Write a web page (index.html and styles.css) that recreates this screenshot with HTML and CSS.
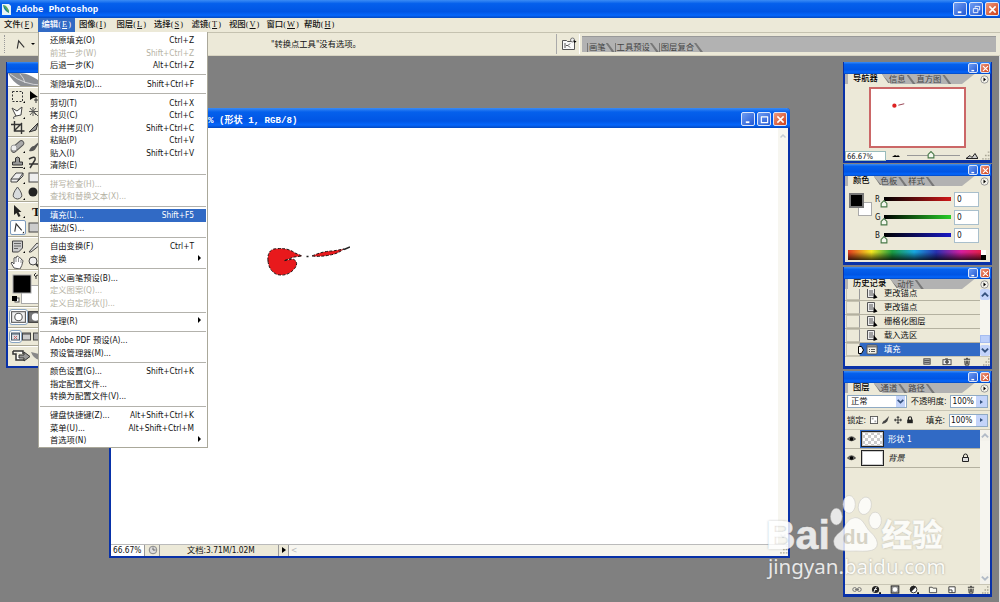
FILE: index.html
```html
<!DOCTYPE html>
<html lang="zh-CN">

<head>
    <meta charset="UTF-8">
    <meta name="viewport" content="width=device-width, initial-scale=1.0">
    <title>Adobe Photoshop</title>
    <link rel="stylesheet" href="styles.css">
</head>

<body>
    <svg class="defs">
        <symbol id="min" viewBox="0 0 10 10"><path d="M2 8h4" stroke="#fff" stroke-width="2" /></symbol>
        <symbol id="restore" viewBox="0 0 10 10"><path d="M3.5 3V1.5h5v4H7M1.5 4h5v4.500h-5z" fill="none" stroke="#fff" /></symbol>
        <symbol id="max" viewBox="0 0 10 10"><path d="M1 2h8M1.500 2v6.500h7V2" fill="none" stroke="#fff" stroke-width="1.300" /></symbol>
        <symbol id="close" viewBox="0 0 10 10"><path d="M1.500 1.500l7 7m0-7l-7 7" stroke="#fff" stroke-width="1.700" /></symbol>
        <symbol id="fly" viewBox="0 0 9 9"><circle cx="4.500" cy="4.500" r="3.700" fill="#f4f3ea" stroke="#999" /><path d="M3.500 2.500v4l2.500-2z" /></symbol>
        <symbol id="trash" viewBox="0 0 9 10"><path d="M1 2.500h7M3.500 1.500h2M2 4l.5 5h4L7 4M3.700 4v4M5.300 4v4" fill="none" stroke="#222" /></symbol>
        <symbol id="eye" viewBox="0 0 10 8"><path d="M.5 4Q5-1 9.500 4Q5 8 .5 4z" fill="#777" stroke="#222" stroke-width=".8" /><circle cx="5" cy="4" r="2" /></symbol>
        <symbol id="lock" viewBox="0 0 9 10"><path d="M2.500 5V3a2 2 0 0 1 4 0v2" fill="none" stroke="#222" /><path d="M1.500 4.500h6v4h-6z" fill="#ddd" stroke="#222" /></symbol>
        <symbol id="doc" viewBox="0 0 12 11"><path d="M1.500.5h7v9h-7z" fill="#eee" stroke="#555" /><path d="M3 3h4M3 5h4M3 7h4" stroke="#555" /><path d="M7.500 5v6l4-1.500z" /></symbol>
        <symbol id="dialog" viewBox="0 0 12 11"><rect x="1" y="1" width="10" height="9" rx="1" fill="#f2f0e4" stroke="#555" /><path d="M1 2.500h10" stroke="#777" stroke-width="2" /><path d="M3 5.500h1M5 5.500h4M3 7.500h1M5 7.500h4" stroke="#555" /></symbol>
        <symbol id="thumb" viewBox="0 0 7 7"><path d="M1 6V3l2.500-2.500L6 3v3z" fill="#f4f8ee" stroke="#4a7a4a" /></symbol>
        <symbol id="grip" viewBox="0 0 8 8"><path d="M6 1h1.500M3.500 4H5M6 4h1.500M1 7h1.500M3.500 7H5M6 7h1.500" stroke="#a9a695" stroke-width="1.300" /></symbol>
        <symbol id="down" viewBox="0 0 8 8"><path d="M1.500 2.500L4 5l2.500-2.500" fill="none" stroke="#35527f" stroke-width="1.500" /></symbol>
        <symbol id="up" viewBox="0 0 8 8"><path d="M1.500 5.500L4 3l2.500 2.500" fill="none" stroke="#35527f" stroke-width="1.500" /></symbol>
        <symbol id="point" viewBox="0 0 14 14"><path d="M3.500 11.500L5 3l6 7" fill="none" stroke="#333" stroke-width="1.200" /></symbol>
    </svg>

    <header class="titlebar">
        <svg class="app-icon" viewBox="0 0 9 11"><path d="M0 0h7l2 2v9H0z" fill="#e8f4f4" /><path d="M1 1q1 6 6 8q1-4-6-8" fill="#167f96" /><path d="M1 1q5 0 6 8" fill="#58a85b" /></svg>
        <span>Adobe Photoshop</span>
        <div class="buttons">
            <i><svg><use href="#min" /></svg></i><i><svg><use href="#restore" /></svg></i><i class="x"><svg><use href="#close" /></svg></i>
        </div>
    </header>
    <nav class="menubar">
        <span>文件(<u>F</u>)</span><span class="open">编辑(<u>E</u>)</span><span>图像(<u>I</u>)</span><span>图层(<u>L</u>)</span><span>选择(<u>S</u>)</span><span>滤镜(<u>T</u>)</span><span>视图(<u>V</u>)</span><span>窗口(<u>W</u>)</span><span>帮助(<u>H</u>)</span>
    </nav>
    <section class="options">
        <span class="gripper"></span>
        <svg class="opt-tool" viewBox="0 0 14 14"><use href="#point" /></svg>
        <span class="caret"></span>
        <span class="opt-text">"转换点工具"没有选项。</span>
        <div class="bridge"><svg viewBox="0 0 16 14"><path d="M1.500 3.500h4l1 1h7v8h-12z" fill="#fafafa" stroke="#555" /><path d="M4 6v5M5 8.500h2l2-2M7 8.500l2 2" fill="none" stroke="#555" /><circle cx="11.500" cy="3" r="2" fill="#eee" stroke="#777" /><path d="M12.500 3l3 1.500-2 1.500z" /></svg></div>
        <div class="well tabs"><b>画笔</b><b>工具预设</b><b>图层复合</b></div>
    </section>

    <main class="workspace">
        <!-- toolbox -->
        <aside class="window toolbox">
            <div class="bar"></div>
            <div class="feather"><svg viewBox="0 0 34 16"><path d="M0 0Q6 12 18 15Q27 17 34 11Q30 6 23 3Q18 0 10 0z" fill="#8d9095" /><path d="M2 1Q16 12 34 12M12 1q4 4 5 9" fill="none" stroke="#dcdde0" stroke-width=".9" /></svg></div>
            <div class="tools three">
                <svg viewBox="0 0 16 15"><rect x="2.500" y="2.500" width="10" height="10" fill="none" stroke="#333" stroke-dasharray="2 1.500" /><path d="M13 14h2v-2z" /></svg>
                <svg viewBox="0 0 16 15"><path d="M3 2v9l3-2 5-1z" /><path d="M9 9v5M7 11h5" stroke="#333" /></svg>
                <svg viewBox="0 0 16 15"><path d="M2 3l5 3 5-4-1 8-5 1zM6 11q-4 1-2 3" fill="#fff" stroke="#444" /><path d="M13 14h2v-2z" /></svg>
                <svg viewBox="0 0 16 15"><path d="M6 2v9M2 6.500h9M3 3l6 7M9 3l-6 7M7 7l6 6" stroke="#555" /></svg>
                <svg viewBox="0 0 16 15"><path d="M4.500 1v10h10M1 4.500h10.500V14M4 11l8-8" fill="none" stroke="#333" stroke-width="1.400" /></svg>
                <svg viewBox="0 0 16 15"><path d="M2 12l9-9-2 7z" fill="#999" stroke="#333" /></svg>
            </div>
            <div class="tools four">
                <svg viewBox="0 0 16 15"><rect x="0" y="5" width="15" height="5" rx="2.500" transform="rotate(-42 7.500 7.500)" fill="#aaa" stroke="#555" /><circle cx="4" cy="9" r="3" fill="#eee" stroke="#999" /><path d="M13 14h2v-2z" /></svg>
                <svg viewBox="0 0 16 15"><path d="M2 12q2-5 5-5l7-6-5 8q-2 4-7 3" fill="#555" /></svg>
                <svg viewBox="0 0 16 15"><path d="M5.500 7V3q2-2 4 0v4h3v3h-10V7zM2 12.500h11" fill="#999" stroke="#333" /><path d="M13 14h2v-2z" /></svg>
                <svg viewBox="0 0 16 15"><path d="M2 4q7-4 6 1L3 13M2 9h9" fill="none" stroke="#333" stroke-width="1.500" /></svg>
                <svg viewBox="0 0 16 15"><path d="M1 9l5-6h7L9 9zM1 9v3h6l2-3M13 3v3l-6 6" fill="#eee" stroke="#444" /><path d="M13 14h2v-2z" /></svg>
                <svg viewBox="0 0 16 15"><rect x="2" y="3" width="12" height="9" fill="#eee" stroke="#444" /></svg>
                <svg viewBox="0 0 16 15"><path d="M7.500 1Q2 8 3.500 11q4 4 8 0Q13 8 7.500 1z" fill="#d8dbdd" stroke="#555" /><path d="M13 14h2v-2z" /></svg>
                <svg viewBox="0 0 16 15"><circle cx="6" cy="6" r="4.500" fill="#222" /></svg>
            </div>
            <div class="tools two">
                <svg viewBox="0 0 16 15"><path d="M4 1v10l2.500-2 2 4 2-1-2-4h3z" fill="#222" /><path d="M13 14h2v-2z" /></svg>
                <span class="type">T</span>
                <svg class="selected" viewBox="0 0 16 15"><use href="#point" /><path d="M13 14h2v-2z" /></svg>
                <svg viewBox="0 0 16 15"><rect x="2" y="3" width="12" height="9" fill="#ccc" stroke="#444" /></svg>
            </div>
            <div class="tools two">
                <svg viewBox="0 0 16 15"><path d="M2.500 2h10v7l-4 4h-6z" fill="#ccc" stroke="#444" /><path d="M4 4.500h7M4 7h7M4 9.500h4" stroke="#666" /><path d="M13 14h2v-2z" /></svg>
                <svg viewBox="0 0 16 15"><path d="M2 13l8-9 3 2-9 7z" fill="#ddd" stroke="#444" /></svg>
                <svg viewBox="0 0 16 15"><path d="M4 13L1 8l1-1 2 2V3q1-1 2 0l1-2q1 0 1.500 1L10 3q1 0 1 1l1 1q1 0 1 1-1 5-3 8z" fill="#fff" stroke="#555" /><path d="M6 3v4M8.500 3v4M11 5v3" stroke="#777" stroke-width=".8" /></svg>
                <svg viewBox="0 0 16 15"><circle cx="6" cy="6" r="4" fill="#eee" stroke="#444" /><path d="M9 9l4 4" stroke="#333" stroke-width="2" /></svg>
            </div>
            <div class="colors">
                <svg viewBox="0 0 50 37"><rect x="13.500" y="15.500" width="20" height="18" fill="#fff" stroke="#aaa" /><rect x="5" y="5" width="18" height="18" fill="#000" stroke="#aaa" /><rect x="7" y="28" width="4" height="4" fill="#fff" stroke="#555" /><rect x="4" y="26" width="5" height="5" /><path d="M28 9V6q0-1 4-1m-4-2l-2 2 2 2" fill="none" stroke="#333" /></svg>
            </div>
            <div class="modes">
                <svg class="on" viewBox="0 0 16 13"><rect x="1.500" y="1.500" width="13" height="10" fill="#eee" stroke="#555" /><circle cx="8" cy="6.500" r="3.500" fill="#fff" stroke="#555" /></svg>
                <svg viewBox="0 0 16 13"><rect x="1.500" y="1.500" width="13" height="10" fill="#777" stroke="#333" /><circle cx="8" cy="6.500" r="3.500" fill="#fff" /></svg>
            </div>
            <div class="modes screens">
                <svg class="on" viewBox="0 0 11 11"><rect x="1.500" y="2" width="8" height="7" fill="#d8dce2" stroke="#456" /><path d="M2 3h7" stroke="#456" /><path d="M4 5l3 3m0-3L4 8" stroke="#c66" /></svg>
                <svg viewBox="0 0 11 11"><rect x="1.500" y="2" width="8" height="7" fill="#ccc" stroke="#444" /><path d="M2 3h7" stroke="#444" /></svg>
                <svg viewBox="0 0 11 11"><rect x="1.500" y="2" width="8" height="7" fill="#aaa" stroke="#444" /></svg>
            </div>
            <div class="jump"><svg viewBox="0 0 30 16"><path d="M3 3h10v3M3 3v3h3v6h8" fill="#fff" stroke="#333" stroke-width="1.500" /><path d="M9 7h5V4l6 4.500-6 4.500v-3H9z" fill="#999" stroke="#333" /><path d="M21 4q2 6 8 8V6z" fill="#888" /></svg></div>
        </aside>

        <!-- document window -->
        <section class="window document">
            <div class="bar">
                <span>% (形状 1, RGB/8)</span>
                <div class="buttons"><i><svg><use href="#min" /></svg></i><i><svg><use href="#max" /></svg></i><i class="x"><svg><use href="#close" /></svg></i></div>
            </div>
            <div class="canvas">
                <svg class="art" viewBox="0 0 100 40">
                    <g fill="#e8191c" stroke="#211" stroke-dasharray="3 1.500">
                        <path d="M18 21Q17 11 24 9Q37 7 45 13L52 16L44 17L34 20.700L43 19Q49 22 45 28Q38 37 27 34.500Q19 31 18 21z" />
                        <path d="M62 16Q73 11 83 11L94 9Q87 14 80 15Q71 17 62 16z" />
                    </g>
                    <path d="M56.500 16.500h2M94 9.500l6-2.500" stroke="#222" stroke-width="1.500" />
                </svg>
                <span class="vscroll"><svg viewBox="0 0 8 8"><use href="#up" /></svg><svg viewBox="0 0 8 8"><use href="#down" /></svg></span>
            </div>
            <div class="status">
                <span class="zoom">66.67%</span>
                <span class="clock"><svg viewBox="0 0 10 10"><circle cx="5" cy="5" r="3.800" fill="#ddd" stroke="#888" /><path d="M5 2.500V5h2.500" fill="none" stroke="#666" /></svg></span>
                <span class="size">文档:3.71M/1.02M</span>
                <span class="play"><i></i></span>
                <span class="hscroll"><em>&lt;</em><svg viewBox="0 0 8 8"><use href="#grip" /></svg></span>
            </div>
        </section>

        <!-- palettes -->
        <section class="window palette navigator">
            <div class="bar"><div class="buttons"><i><svg><use href="#min" /></svg></i><i class="x"><svg><use href="#close" /></svg></i></div></div>
            <div class="tabs"><b class="active">导航器</b><b>信息</b><b>直方图</b><span class="fly"><svg viewBox="0 0 9 9"><use href="#fly" /></svg></span></div>
            <div class="preview"><svg viewBox="0 0 93 58"><circle cx="23" cy="17" r="2.200" fill="#d22" /><path d="M27 16.500l6-1.500" stroke="#945" /></svg></div>
            <div class="navfoot">
                <span class="field">66.67%</span>
                <svg class="mount" viewBox="0 0 8 5"><path d="M0 4l3-2 2 1 1-1 2 2z" /></svg>
                <span class="track"><svg viewBox="0 0 7 7"><use href="#thumb" /></svg></span>
                <svg class="mount big" viewBox="0 0 12 6"><path d="M0 5.500l4-3 2 2 3-4 3 5z" fill="#ccc" stroke="#222" /></svg>
                <svg class="grip" viewBox="0 0 8 8"><use href="#grip" /></svg>
            </div>
        </section>

        <section class="window palette color">
            <div class="bar"><div class="buttons"><i><svg><use href="#min" /></svg></i><i class="x"><svg><use href="#close" /></svg></i></div></div>
            <div class="tabs"><b class="active">颜色</b><b>色板</b><b>样式</b><span class="fly"><svg viewBox="0 0 9 9"><use href="#fly" /></svg></span></div>
            <div class="mixer">
                <svg class="swatches" viewBox="0 0 24 26"><rect x="9.500" y="10.500" width="13" height="13" fill="#fff" stroke="#aaa" /><rect x="1" y="2" width="13" height="13" stroke="#777" stroke-width="2" /><rect x="2" y="3" width="11" height="11" /></svg>
                <div class="channels">
                    <div><label>R</label><span class="ramp red"><svg viewBox="0 0 7 7"><use href="#thumb" /></svg></span><span class="num">0</span></div>
                    <div><label>G</label><span class="ramp green"><svg viewBox="0 0 7 7"><use href="#thumb" /></svg></span><span class="num">0</span></div>
                    <div><label>B</label><span class="ramp blue"><svg viewBox="0 0 7 7"><use href="#thumb" /></svg></span><span class="num">0</span></div>
                </div>
            </div>
            <div class="spectrum"><i></i></div>
        </section>

        <section class="window palette history">
            <div class="bar"><div class="buttons"><i><svg><use href="#min" /></svg></i><i class="x"><svg><use href="#close" /></svg></i></div></div>
            <div class="tabs"><b class="active">历史记录</b><b>动作</b><span class="fly"><svg viewBox="0 0 9 9"><use href="#fly" /></svg></span></div>
            <div class="scrolled">
                <ul>
                    <li><s></s><svg viewBox="0 0 12 11"><use href="#doc" /></svg>更改锚点</li>
                    <li><s></s><svg viewBox="0 0 12 11"><use href="#doc" /></svg>更改锚点</li>
                    <li><s></s><svg viewBox="0 0 12 11"><use href="#doc" /></svg>栅格化图层</li>
                    <li><s></s><svg viewBox="0 0 12 11"><use href="#doc" /></svg>载入选区</li>
                    <li class="current"><s></s><svg viewBox="0 0 12 11"><use href="#dialog" /></svg>填充<svg class="marker" viewBox="0 0 6 8"><path d="M.5.500h3l2 3.500-2 3.500h-3z" fill="#fff" stroke="#000" /></svg></li>
                </ul>
                <span class="xpscroll"><svg viewBox="0 0 8 8"><use href="#up" /></svg><i></i><svg viewBox="0 0 8 8"><use href="#down" /></svg></span>
            </div>
            <div class="foot">
                <svg viewBox="0 0 10 10"><rect x="1.500" y="2" width="7" height="6" fill="#bbb" stroke="#444" /><path d="M2 4h6M2 6h6" stroke="#444" /></svg>
                <svg viewBox="0 0 10 10"><rect x=".5" y="3" width="9" height="5.500" fill="#eee" stroke="#444" /><path d="M3 2h3" stroke="#444" /><circle cx="5" cy="5.500" r="1.500" fill="#777" stroke="#333" /></svg>
                <svg viewBox="0 0 9 10"><use href="#trash" /></svg>
                <svg class="grip" viewBox="0 0 8 8"><use href="#grip" /></svg>
            </div>
        </section>

        <section class="window palette layers">
            <div class="bar"><div class="buttons"><i><svg><use href="#min" /></svg></i><i class="x"><svg><use href="#close" /></svg></i></div></div>
            <div class="tabs"><b class="active">图层</b><b>通道</b><b>路径</b><span class="fly"><svg viewBox="0 0 9 9"><use href="#fly" /></svg></span></div>
            <div class="row">
                <span class="select">正常<svg viewBox="0 0 8 8"><use href="#down" /></svg></span>
                <span>不透明度:</span>
                <span class="percent">100%<i></i></span>
            </div>
            <div class="row locks">
                <span>锁定:</span>
                <svg viewBox="0 0 9 9"><rect x=".5" y=".5" width="8" height="8" fill="#fff" stroke="#555" /><path d="M2 2h2v2H2zM5 5h2v2H5z" fill="#aaa" /></svg>
                <svg viewBox="0 0 9 9"><path d="M0 9q1-4 3-4l5-5-2 6q-2 3-6 3" fill="#444" /></svg>
                <svg viewBox="0 0 9 9"><path d="M4.500 0v9M0 4.500h9M3 1.500h3M3 7.500h3M1.500 3v3M7.500 3v3" stroke="#333" /></svg>
                <svg viewBox="0 0 9 10"><path d="M2.500 5V3a2 2 0 0 1 4 0v2" fill="none" stroke="#222" stroke-width="1.400" /><path d="M1 4.500h7V9H1z" fill="#222" /></svg>
                <span class="push">填充:</span>
                <span class="percent">100%<i></i></span>
            </div>
            <div class="scrolled">
                <div class="stack">
                    <div class="layer current"><svg class="eye" viewBox="0 0 10 8"><use href="#eye" /></svg><span class="thumbnail checks"></span>形状 1</div>
                    <div class="layer"><svg class="eye" viewBox="0 0 10 8"><use href="#eye" /></svg><span class="thumbnail"></span><em>背景</em><svg class="lock" viewBox="0 0 9 10"><use href="#lock" /></svg></div>
                </div>
                <span class="xpscroll off"><svg viewBox="0 0 8 8"><use href="#up" /></svg><svg viewBox="0 0 8 8"><use href="#down" /></svg></span>
            </div>
            <div class="foot">
                <svg viewBox="0 0 13 10"><path d="M1 5a2 2 0 0 1 5 0 2 2 0 0 1-5 0M7 5a2 2 0 0 1 5 0 2 2 0 0 1-5 0M4 5h5" fill="none" stroke="#777" stroke-width="1.300" /></svg>
                <svg viewBox="0 0 11 10"><circle cx="5" cy="5" r="4" fill="#222" /><path d="M3 8l3-6M3.500 5h3" stroke="#fff" /><path d="M9 8h2v2H9z" /></svg>
                <svg viewBox="0 0 10 10"><rect x=".7" y="1" width="8.600" height="8" fill="#999" stroke="#222" /><circle cx="5" cy="5" r="2.500" fill="#fff" /></svg>
                <svg viewBox="0 0 11 10"><circle cx="5" cy="5" r="3.700" fill="#fff" stroke="#222" /><path d="M2.300 7.700A3.800 3.800 0 0 1 7.700 2.300z" fill="#222" /><path d="M9 8h2v2H9z" /></svg>
                <svg viewBox="0 0 10 10"><path d="M1 8.500v-6h3l1 1h4v5z" fill="#f8f8f0" stroke="#444" /></svg>
                <svg viewBox="0 0 10 10"><path d="M1.500 2h7v6.500h-7z" fill="#fff" stroke="#333" /><path d="M1.500 5.500H5v3" fill="none" stroke="#333" /></svg>
                <svg viewBox="0 0 9 10"><use href="#trash" /></svg>
                <svg class="grip" viewBox="0 0 8 8"><use href="#grip" /></svg>
            </div>
        </section>
    </main>

    <!-- open edit menu -->
    <div class="menu">
        <p>还原填充(O)<kbd>Ctrl+Z</kbd></p>
        <p class="disabled">前进一步(W)<kbd>Shift+Ctrl+Z</kbd></p>
        <p>后退一步(K)<kbd>Alt+Ctrl+Z</kbd></p>
        <hr>
        <p>渐隐填充(D)...<kbd>Shift+Ctrl+F</kbd></p>
        <hr>
        <p>剪切(T)<kbd>Ctrl+X</kbd></p>
        <p>拷贝(C)<kbd>Ctrl+C</kbd></p>
        <p>合并拷贝(Y)<kbd>Shift+Ctrl+C</kbd></p>
        <p>粘贴(P)<kbd>Ctrl+V</kbd></p>
        <p>贴入(I)<kbd>Shift+Ctrl+V</kbd></p>
        <p>清除(E)</p>
        <hr>
        <p class="disabled">拼写检查(H)...</p>
        <p class="disabled">查找和替换文本(X)...</p>
        <hr>
        <p class="hover">填充(L)...<kbd>Shift+F5</kbd></p>
        <p>描边(S)...</p>
        <hr>
        <p>自由变换(F)<kbd>Ctrl+T</kbd></p>
        <p class="sub">变换</p>
        <hr>
        <p>定义画笔预设(B)...</p>
        <p class="disabled">定义图案(Q)...</p>
        <p class="disabled">定义自定形状(J)...</p>
        <hr>
        <p class="sub">清理(R)</p>
        <hr>
        <p>Adobe PDF 预设(A)...</p>
        <p>预设管理器(M)...</p>
        <hr>
        <p>颜色设置(G)...<kbd>Shift+Ctrl+K</kbd></p>
        <p>指定配置文件...</p>
        <p>转换为配置文件(V)...</p>
        <hr>
        <p>键盘快捷键(Z)...<kbd>Alt+Shift+Ctrl+K</kbd></p>
        <p>菜单(U)...<kbd>Alt+Shift+Ctrl+M</kbd></p>
        <p class="sub">首选项(N)</p>
    </div>

    <!-- watermark -->
    <div class="watermark">
        <div class="logo"><span>Bai</span><div class="paw"><svg viewBox="0 0 54 58"><ellipse cx="8" cy="22" rx="6" ry="8.500" /><ellipse cx="21" cy="9.500" rx="6.300" ry="9" /><ellipse cx="37" cy="11" rx="6.500" ry="9" transform="rotate(15 37 11)" /><ellipse cx="47.500" cy="26" rx="6.300" ry="8.500" /><path d="M27 23Q33 23 37 30Q40 36 46 41Q53 50 47 55Q42 58 28 57Q13 58 8 54Q2 47 9 40Q15 36 18 29Q22 23 27 23z" /></svg><b>du</b></div><span class="cn">经验</span></div>
        <div class="url">jingyan.baidu.com</div>
    </div>
</body>

</html>
```
FILE: styles.css
```css
* {
    box-sizing: border-box;
}

body {
    margin: 0;
    width: 1000px;
    height: 602px;
    overflow: hidden;
    position: relative;
    display: flex;
    flex-direction: column;
    background: #ece9d8;
    color: #111;
    font: 8.3px/1 "DejaVu Sans Condensed", "Noto Sans CJK SC", sans-serif;
    white-space: nowrap;
}

svg {
    display: block;
    flex: none;
}

i, em, s {
    font-style: normal;
    text-decoration: none;
}

.defs {
    position: absolute;
    width: 0;
    height: 0;
}

/* title bars */
.titlebar,
.bar {
    display: flex;
    align-items: center;
    color: #fff;
    font: bold 9.15px "Liberation Mono", "Noto Sans CJK SC", monospace;
    background: linear-gradient(#3b8cf5, #0560ec 20%, #0055e4 65%, #0566fb 85%, #0348c0);
}

.titlebar {
    flex: none;
    height: 18px;
    padding: 0 1px 0 2px;
}

.app-icon {
    width: 9px;
    height: 11px;
    margin-right: 5px;
}

.buttons {
    display: flex;
    gap: 2px;
    margin-left: auto;
}

.buttons i {
    width: 14px;
    height: 14px;
    border: 1px solid #dbe6fb;
    border-radius: 2px;
    display: grid;
    place-items: center;
    background: linear-gradient(135deg, #6f9df2, #2258d4);
}

.buttons .x {
    background: linear-gradient(135deg, #ec9a80, #cf3f17);
}

.buttons svg {
    width: 9px;
    height: 9px;
}

.menubar {
    flex: none;
    display: flex;
    height: 14px;
    font: 500 8.4px/13px "Liberation Serif", "Noto Sans CJK SC", serif;
}

.menubar span {
    width: 37.5px;
    padding-left: 4px;
}

.menubar u {
    padding: 0 1px;
}

.menubar .open {
    background: #316ac5;
    color: #fff;
}

/* tool options */
.options {
    flex: none;
    height: 24px;
    display: flex;
    align-items: center;
    border-top: 1px solid #c5c2b0;
    border-bottom: 1px solid #d8d4c2;
}

.gripper {
    height: 18px;
    margin-left: 4px;
    border-left: 1px dotted #999;
}

.opt-tool {
    width: 13px;
    height: 13px;
    margin-left: 9px;
}

.caret {
    margin-left: 4px;
    border: 2px solid transparent;
    border-top-color: #000;
    border-bottom: 0;
}

.opt-text {
    width: 285px;
    margin-left: 236px;
}

.bridge {
    width: 24px;
    height: 20px;
    padding: 3px 4px;
    border-left: 1px solid #aaa;
    border-right: 1px solid #fff;
}

.bridge svg {
    width: 16px;
    height: 14px;
}

.tabs {
    display: flex;
    align-items: flex-end;
    height: 10px;
    background: #b2b2b2;
    color: #444;
    flex: none;
}

.tabs b {
    font-weight: 400;
    line-height: 9px;
    height: 9px;
    padding: 0 10px 0 1px;
    position: relative;
}

.tabs b::after {
    content: "";
    position: absolute;
    right: 0;
    top: 0;
    width: 9px;
    height: 9px;
    background: #777;
    clip-path: polygon(0 0, 25% 0, 100% 100%, 70% 100%);
}

.tabs .active {
    background: #ece9d8;
    color: #000;
    padding: 0 13px 0 5px;
    margin: 0 -3px 0 3px;
    height: 10px;
    font-weight: 500;
    clip-path: polygon(0 0, calc(100% - 9px) 0, 100% 100%, 0 100%);
}

.fly {
    margin-left: auto;
    width: 28px;
    height: 10px;
    background: #ece9d8;
    clip-path: polygon(45% 0, 100% 0, 100% 100%, 0 100%);
}

.fly svg {
    width: 9px;
    height: 9px;
    margin: 1px 0 0 18px;
}

.well {
    width: 414px;
    height: 16px;
    margin-left: 2px;
    padding-left: 5px;
    border-top: 1px solid #999;
}

.well b {
    padding: 0 9px 0 1px;
    border-left: 1px solid #777;
}

/* floating windows */
.workspace {
    position: relative;
    flex: 1;
    background: #808080;
    border-right: 1px solid #ddd;
}

.window {
    position: absolute;
    border: 2px solid #0831a8;
    border-top: 0;
    background: #ece9d8;
    display: flex;
    flex-direction: column;
}

.bar {
    flex: none;
    height: 11px;
    margin: 0 -1px;
}

.toolbox {
    left: 6px;
    top: 6px;
    width: 66px;
    height: 306px;
}

.feather {
    height: 16px;
    background: #fff;
    overflow: hidden;
}

.feather svg {
    width: 34px;
    height: 16px;
}

.tools,
.colors,
.modes,
.jump {
    border-top: 1px solid #aaa796;
    box-shadow: inset 0 1px #fff;
    padding: 2px;
}

.tools {
    display: grid;
    grid-template-columns: 17px 17px;
    grid-auto-rows: 15.5px;
}

.tools svg {
    width: 16px;
    height: 15px;
}

.three {
    height: 50px;
}

.four {
    height: 65px;
}

.two {
    height: 35px;
}

.two + .two {
    height: 33px;
}

.tools .selected {
    background: #fff;
    border: 1px solid #7d9bbd;
    border-radius: 2px;
}

.type {
    font: bold 13px "Liberation Serif", serif;
    padding-left: 5px;
}

.colors {
    height: 37px;
    padding: 0;
}

.colors svg {
    width: 50px;
    height: 37px;
}

.modes {
    display: flex;
    height: 21px;
    padding: 3px 2px;
}

.modes svg {
    width: 17px;
    height: 14px;
}

.screens {
    height: 18px;
}

.screens svg {
    width: 11px;
    height: 11px;
}

.modes .on {
    background: #fff;
    outline: 1px solid #8aa6c4;
    border-radius: 2px;
}

.jump svg {
    width: 30px;
    height: 16px;
}

.document {
    left: 109px;
    top: 52px;
    width: 681px;
    height: 450px;
    border-radius: 4px 4px 0 0;
}

.document .bar {
    height: 20px;
    margin: 0 -2px;
    padding: 2px 3px 0 99px;
    border-radius: 4px 4px 0 0;
}

.canvas {
    flex: 1;
    display: flex;
    background: #fff;
}

.art {
    width: 100px;
    height: 40px;
    margin: 112px 0 0 139px;
}

.vscroll {
    width: 10px;
    margin-left: auto;
    padding: 4px 1px;
    background: #f7f6f0;
    display: flex;
    flex-direction: column;
    justify-content: space-between;
}

.vscroll svg {
    width: 8px;
    height: 8px;
    opacity: .25;
}

.status {
    display: flex;
    flex: none;
    height: 12px;
    line-height: 11px;
    border-top: 1px solid #bbb;
}

.status span {
    border-right: 1px solid #999;
    height: 11px;
}

.status .zoom {
    width: 34px;
    background: #fff;
    padding-left: 2px;
}

.status .clock {
    width: 15px;
    padding-left: 3px;
}

.clock svg {
    width: 10px;
    height: 10px;
}

.status .size {
    width: 119px;
    padding-left: 27px;
}

.status .play {
    width: 10px;
    padding: 2px 3px;
}

.play i {
    display: block;
    border: 3px solid transparent;
    border-left: 4px solid #000;
    border-right: 0;
}

.status .hscroll {
    flex: 1;
    border: 0;
    background: #f7f6f0;
    display: flex;
    justify-content: space-between;
    color: #bbb;
    padding-left: 2px;
}

.hscroll svg {
    width: 9px;
    height: 9px;
}

/* palettes */
.palette {
    left: 843px;
    width: 149px;
    border-width: 0 2px 3px;
}

.palette .bar {
    padding: 0 1px;
    height: 12px;
}

.palette .buttons i {
    width: 10px;
    height: 10px;
}

.palette .buttons svg {
    width: 7px;
    height: 7px;
}

.navigator {
    top: 6px;
    height: 101px;
}

.preview {
    width: 97px;
    height: 61px;
    margin: 3px 0 3px 24px;
    border: 2px solid #cb6767;
    background: #fff;
}

.preview svg {
    width: 93px;
    height: 57px;
}

.navfoot {
    display: flex;
    align-items: center;
    height: 9px;
}

.field {
    width: 41px;
    height: 10px;
    padding: 1px 1px 0;
    background: #fff;
    border: 1px solid #9bb;
    line-height: 8px;
    font-size: 7.6px;
}

.mount {
    width: 8px;
    height: 5px;
    margin-left: 6px;
}

.mount.big {
    width: 12px;
    height: 6px;
}

.track {
    width: 53px;
    margin-left: 7px;
    border-top: 1px solid #999;
    height: 1px;
}

.track svg {
    width: 8px;
    height: 8px;
    margin: -5px 0 0 20px;
}

.grip {
    width: 9px;
    height: 9px;
    margin-left: auto;
}

.color {
    top: 108px;
    height: 101px;
}

.mixer {
    display: flex;
    height: 64px;
    padding-top: 6px;
}

.swatches {
    width: 24px;
    height: 26px;
    margin-left: 4px;
}

.channels {
    padding-left: 2px;
}

.channels div {
    display: flex;
    height: 18px;
}

.channels label {
    width: 9px;
    padding-top: 4px;
    font-size: 8px;
}

.ramp {
    width: 67px;
    height: 4px;
    margin-top: 5px;
}

.ramp svg {
    width: 8px;
    height: 8px;
    margin: 3px 0 0 -4px;
}

.red {
    background: linear-gradient(90deg, #000, #d01818);
}

.green {
    background: linear-gradient(90deg, #000, #28cc28);
}

.blue {
    background: linear-gradient(90deg, #000, #1818c4);
}

.num {
    width: 25px;
    height: 15px;
    margin-left: 3px;
    padding: 2px 2px;
    background: #fff;
    border: 1px solid #a9bfcc;
}

.spectrum {
    width: 138px;
    height: 10px;
    margin-left: 3px;
    display: flex;
    background: linear-gradient(transparent 20%, rgba(0, 0, 0, .75)), linear-gradient(90deg, #e23a20, #f6e820 17%, #1a9c40 32%, #18a8e0 48%, #2830b0 64%, #d81ea0 82%, #e82030);
}

.spectrum i {
    width: 5px;
    height: 10px;
    margin-left: auto;
    background: linear-gradient(#fff 50%, #000 50%);
}

.history {
    top: 211px;
    height: 102px;
}

.scrolled {
    display: flex;
    overflow: hidden;
}

.history .scrolled {
    height: 68px;
}

.history ul {
    flex: 1;
    margin: -2px 0 0;
    padding: 0;
}

.history li {
    display: flex;
    align-items: center;
    height: 14px;
    border-bottom: 1px solid #b4b1a0;
    position: relative;
}

.history s {
    width: 14px;
    height: 13px;
    margin-left: 1px;
    border: 1px solid #c6c3b2;
    border-right-color: #999;
    background: #ece9d8;
}

.history li svg {
    width: 12px;
    height: 11px;
    margin: 0 6px 0 6px;
}

.current {
    background: linear-gradient(90deg, #ece9d8 15px, #316ac5 15px);
    color: #fff;
}

.history li .marker {
    position: absolute;
    left: 7px;
    width: 6px;
    height: 8px;
}

.xpscroll {
    width: 10px;
    background: #f6f5ef;
    display: flex;
    flex-direction: column;
}

.xpscroll svg {
    width: 10px;
    height: 11px;
    background: #c4d4fa;
    border-radius: 2px;
}

.xpscroll svg + svg,
.xpscroll i {
    margin-top: auto;
}

.xpscroll i {
    height: 8px;
    background: #bccffa;
    border: 1px solid #a5bcf0;
}

.xpscroll i + svg {
    margin-top: 2px;
}

.xpscroll.off svg {
    background: #efeee7;
    opacity: .35;
}

.foot {
    display: flex;
    align-items: center;
    height: 10px;
    gap: 10px;
    border-top: 1px solid #c8c5b4;
}

.foot svg {
    width: 10px;
    height: 9px;
}

.foot .grip {
    width: 8px;
    height: 8px;
}

.history .foot {
    padding-left: 77px;
}

.layers {
    top: 315px;
    height: 226px;
}

.row {
    display: flex;
    align-items: center;
    height: 18px;
    padding: 0 2px;
    gap: 4px;
    border-bottom: 1px solid #c8c5b4;
    flex: none;
}

.locks {
    height: 19px;
}

.select {
    display: flex;
    align-items: center;
    width: 62px;
    height: 13px;
    padding: 0 1px 0 3px;
    border: 1px solid #8faac4;
    background: #fff;
}

.select svg {
    width: 9px;
    height: 11px;
    margin-left: auto;
    background: #c4d4fa;
}

.percent {
    display: flex;
    align-items: center;
    width: 39px;
    height: 13px;
    margin-left: auto;
    padding-left: 1px;
    border: 1px solid #8faac4;
    background: #fff;
}

.percent i {
    width: 11px;
    height: 11px;
    margin-left: auto;
    background: #c4d4fa;
    display: grid;
    place-items: center;
}

.percent i::after {
    content: "";
    border: 2px solid transparent;
    border-left: 3px solid #35527f;
    border-right: 0;
}

.locks svg {
    width: 8px;
    height: 8px;
}

.locks .push {
    margin-left: auto;
}

.locks .percent {
    margin-left: 0;
}

.layers .scrolled {
    flex: 1;
}

.stack {
    flex: 1;
}

.layer {
    display: flex;
    align-items: center;
    height: 19px;
    border-bottom: 1px solid #b4b1a0;
}

.layer .eye {
    width: 9px;
    height: 8px;
    margin: 0 5px 0 2px;
}

.thumbnail {
    width: 23px;
    height: 16px;
    margin-right: 4px;
    background: #fff;
    border: 1px solid #222;
    outline: 1px solid #ccc;
    outline-offset: -2px;
}

.checks {
    background: repeating-conic-gradient(#ccc 0 25%, #fff 0 50%) 0 0 / 6px 6px;
}

.layer em {
    font-style: italic;
}

.layer .lock {
    width: 9px;
    height: 10px;
    margin-left: auto;
    margin-right: 10px;
}

.layers .foot {
    gap: 9px;
    padding-left: 7px;
}

.layers .foot .grip {
    margin-left: -4px;
}

/* drop-down menu */
.menu {
    position: absolute;
    left: 38px;
    top: 32px;
    width: 170px;
    height: 416px;
    padding: 2px 1px;
    background: #fff;
    border: 1px solid #aaa89a;
    border-top: 0;
}

.menu p {
    margin: 0;
    height: 12.5px;
    line-height: 12.5px;
    display: flex;
    padding: 0 12px 0 10px;
}

.menu kbd {
    font: inherit;
    margin-left: auto;
}

.menu .disabled {
    color: #b5b2a4;
}

.menu .hover {
    background: #316ac5;
    color: #fff;
}

.menu .sub::after {
    content: "";
    align-self: center;
    margin: -3px -7px 0 auto;
    border: 3px solid transparent;
    border-left-color: #000;
    border-right: 0;
}

.menu hr {
    margin: 2.75px 0 2.5px;
    height: 1px;
    border: 0;
    border-top: 1px solid #b3b2ac;
}

/* watermark */
.watermark {
    position: absolute;
    left: 766px;
    top: 495px;
    width: 182px;
    color: #fff;
    opacity: .82;
    text-shadow: 0 0 2px rgba(110, 110, 110, .8);
}

.logo {
    display: flex;
    align-items: flex-end;
    height: 57px;
    font: bold 41px/47px "Liberation Sans", sans-serif;
    -webkit-text-stroke: .6px #fff;
}

.logo span {
    height: 40px;
}

.paw {
    display: grid;
    width: 52px;
}

.paw > * {
    grid-area: 1 / 1;
}

.paw svg {
    width: 54px;
    height: 57px;
    margin-left: -2px;
    fill: #fff;
    stroke: #bbb;
    stroke-width: .5;
    overflow: visible;
}

.paw b {
    align-self: end;
    font-size: 21px;
    line-height: 23px;
    padding: 0 0 4px 13px;
    color: #d2cfc2;
    text-shadow: none;
    -webkit-text-stroke: 0;
}

.logo .cn {
    font: bold 30.500px/36px "Noto Sans CJK SC", sans-serif;
    height: 37px;
}

.url {
    font: 20.5px/28px "Noto Sans", sans-serif;
    padding-left: 2px;
}
```
